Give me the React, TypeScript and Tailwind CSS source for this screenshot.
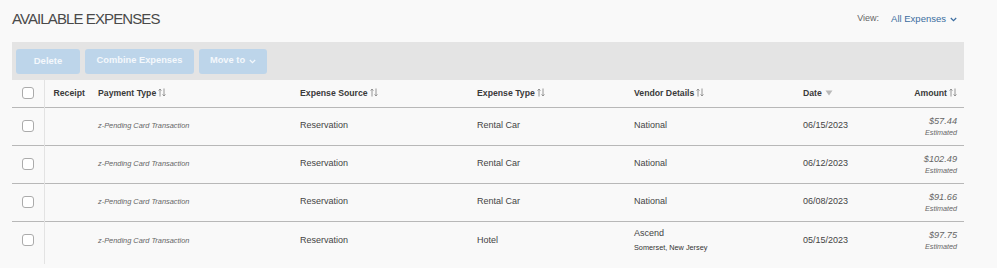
import React from 'react';

type Row = {
  payment: string;
  source: string;
  type: string;
  vendor: string;
  location?: string;
  date: string;
  amount: string;
};

const rows: Row[] = [
  { payment: 'z-Pending Card Transaction', source: 'Reservation', type: 'Rental Car', vendor: 'National', date: '06/15/2023', amount: '$57.44' },
  { payment: 'z-Pending Card Transaction', source: 'Reservation', type: 'Rental Car', vendor: 'National', date: '06/12/2023', amount: '$102.49' },
  { payment: 'z-Pending Card Transaction', source: 'Reservation', type: 'Rental Car', vendor: 'National', date: '06/08/2023', amount: '$91.66' },
  { payment: 'z-Pending Card Transaction', source: 'Reservation', type: 'Hotel', vendor: 'Ascend', location: 'Somerset, New Jersey', date: '05/15/2023', amount: '$97.75' },
];

function SortIcon() {
  return (
    <svg width="8" height="9" viewBox="0 0 8 9" className="inline-block ml-[2px] -mt-[1px] align-middle" fill="none" stroke="#8a8a8a" strokeWidth="0.9">
      <path d="M2 8.5V1M0.6 2.6L2 1L3.4 2.6" />
      <path d="M6 0.5V8M4.6 6.4L6 8L7.4 6.4" />
    </svg>
  );
}

function FilterIcon() {
  return (
    <svg width="8" height="6" viewBox="0 0 8 6" className="inline-block ml-[3px] -mt-[1px] align-middle">
      <path d="M0.5 0.5H7.5L4 5.5Z" fill="#b9b9b9" />
    </svg>
  );
}

function Chevron({ color }: { color: string }) {
  return (
    <svg width="7" height="5" viewBox="0 0 7 5" className="inline-block ml-[4px] align-middle" fill="none" stroke={color} strokeWidth="1.2">
      <path d="M0.8 1L3.5 3.7L6.2 1" />
    </svg>
  );
}

function Checkbox() {
  return <div className="mx-auto w-[12px] h-[12px] rounded-[3px] border border-[#ababab] bg-white" />;
}

export default function App() {
  return (
    <div className="min-h-screen bg-[#f9f9f9] font-['Liberation_Sans',Arial,sans-serif] text-[#444]">
      <div className="pl-[12px] pr-[33px] pt-[10px]">
        {/* Header */}
        <div className="flex items-center justify-between h-[18px] pr-[7px]">
          <h1 className="text-[15px] leading-[18px] tracking-[-0.9px] text-[#4a4a4a]">AVAILABLE EXPENSES</h1>
          <div className="flex items-center text-[9px]">
            <span className="text-[#666] mr-[12px]">View:</span>
            <span className="text-[#3b6da0] text-[9.5px]">All Expenses</span>
            <Chevron color="#3b6da0" />
          </div>
        </div>

        {/* Toolbar */}
        <div className="mt-[14px] h-[38px] bg-[#e4e4e4] flex items-center pl-[4px] gap-[5px]">
          <button className="w-[64px] h-[25px] rounded-[3px] bg-[#bdd5ea] text-[#f4f8fc] font-bold text-[9.5px] flex items-center justify-center">Delete</button>
          <button className="w-[109px] h-[25px] rounded-[3px] bg-[#bdd5ea] text-[#f4f8fc] font-bold text-[9.3px] flex items-center justify-center">Combine Expenses</button>
          <button className="w-[68px] h-[25px] rounded-[3px] bg-[#bdd5ea] text-[#f4f8fc] font-bold text-[9.3px] flex items-center justify-center">
            Move to
            <Chevron color="#f4f8fc" />
          </button>
        </div>

        {/* Table */}
        <table className="table-fixed w-[952px] border-collapse">
          <colgroup>
            <col className="w-[32px]" />
            <col className="w-[45px]" />
            <col className="w-[202px]" />
            <col className="w-[177px]" />
            <col className="w-[157px]" />
            <col className="w-[169px]" />
            <col className="w-[76px]" />
            <col className="w-[94px]" />
          </colgroup>
          <thead>
            <tr className="h-[27px] border-b border-[#b8b8b8] text-[8.7px] font-bold text-[#3a3a3a] text-left">
              <th className="border-r border-[#e3e3e3]"><Checkbox /></th>
              <th className="pl-[9px] font-bold">Receipt</th>
              <th className="pl-[9px] font-bold">Payment Type<SortIcon /></th>
              <th className="pl-[9px] font-bold">Expense Source<SortIcon /></th>
              <th className="pl-[9px] font-bold">Expense Type<SortIcon /></th>
              <th className="pl-[9px] font-bold">Vendor Details<SortIcon /></th>
              <th className="pl-[9px] font-bold">Date<FilterIcon /></th>
              <th className="pr-[7px] text-right font-bold">Amount<SortIcon /></th>
            </tr>
          </thead>
          <tbody>
            {rows.map((r, i) => (
              <tr key={i} className={i < rows.length - 1 ? 'h-[38px] border-b border-[#b8b8b8]' : 'h-[38px]'}>
                <td className="border-r border-[#e3e3e3]"><Checkbox /></td>
                <td />
                <td className="pl-[9px] italic text-[7.4px] text-[#666]">{r.payment}</td>
                <td className="pl-[9px] text-[9px]">{r.source}</td>
                <td className="pl-[9px] text-[9px]">{r.type}</td>
                <td className="pl-[9px] text-[9px]">
                  <div>{r.vendor}</div>
                  {r.location && <div className="text-[7.3px] mt-[2px] text-[#333]">{r.location}</div>}
                </td>
                <td className="pl-[9px] text-[9px]">{r.date}</td>
                <td className="pr-[7px] text-right italic text-[#666]">
                  <div className="text-[9.2px] leading-[12px]">{r.amount}</div>
                  <div className="text-[7.2px] leading-[10px] mt-[1px]">Estimated</div>
                </td>
              </tr>
            ))}
            <tr className="h-[5px]">
              <td className="border-r border-[#e3e3e3]" />
              <td colSpan={7} />
            </tr>
          </tbody>
        </table>
      </div>
    </div>
  );
}
